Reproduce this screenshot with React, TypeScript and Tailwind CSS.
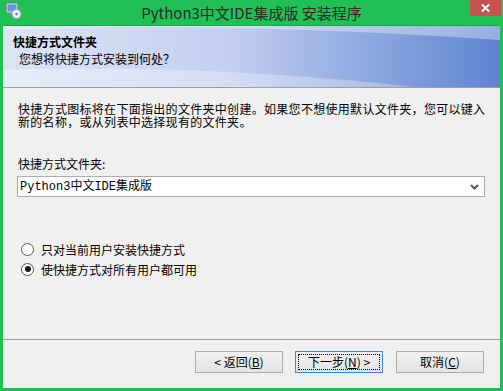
import React from 'react'

const cjk = { fontFamily: '"Noto Sans CJK SC", "Liberation Sans", sans-serif' }
const mono = { fontFamily: '"Liberation Mono", "Noto Sans CJK SC", monospace' }

function SetupIcon() {
  return (
    <svg width="17" height="17" viewBox="0 0 17 17">
      <rect x="1" y="1" width="12" height="10" rx="1" fill="#d7dde6" stroke="#6b7a8c" />
      <rect x="2.5" y="2.5" width="9" height="7" fill="#5b9be0" />
      <rect x="5" y="11" width="4" height="2" fill="#8a96a6" />
      <circle cx="11.5" cy="12" r="4.5" fill="#eef2f6" stroke="#8fa0b3" />
      <circle cx="11.5" cy="12" r="1.3" fill="#4b7ec2" />
    </svg>
  )
}

function HeaderArt() {
  return (
    <svg className="absolute inset-0" width="497" height="61" viewBox="0 0 497 61" preserveAspectRatio="none">
      <defs>
        <linearGradient id="hg" x1="0" y1="0" x2="1" y2="0">
          <stop offset="0" stopColor="#dde4f4" />
          <stop offset="0.45" stopColor="#c3cff0" />
          <stop offset="0.75" stopColor="#8ca6e0" />
          <stop offset="1" stopColor="#5e84d0" />
        </linearGradient>
      </defs>
      <rect width="497" height="61" fill="url(#hg)" />
      <path d="M0 4 C 150 -2, 320 2, 497 14 L 497 0 L 0 0 Z" fill="#ffffff" opacity="0.35" />
      <path d="M0 44 C 120 40, 260 44, 420 62 L 0 62 Z" fill="#ffffff" opacity="0.3" />
    </svg>
  )
}

function Radio({ checked, label }: { checked?: boolean; label: string }) {
  return (
    <div className="flex items-center h-[20px]">
      <span className="ml-[18px] w-[13px] h-[13px] rounded-full border border-[#555] bg-white flex items-center justify-center">
        {checked && <span className="w-[6px] h-[6px] rounded-full bg-[#1a1a1a]" />}
      </span>
      <span className="ml-[7px] text-[12px] text-black leading-[13px]">{label}</span>
    </div>
  )
}

function Btn({ children, focused }: { children: React.ReactNode; focused?: boolean }) {
  return (
    <div
      className={
        'w-[88px] h-[22px] flex items-center justify-center text-[12px] text-black bg-gradient-to-b from-[#f0f0f0] to-[#e5e5e5] ' +
        (focused ? 'border border-[#3c8be0] p-[2px]' : 'border border-[#acacac]')
      }
    >
      {focused ? (
        <div className="w-full h-full border border-dotted border-black flex items-center justify-center">{children}</div>
      ) : (
        children
      )}
    </div>
  )
}

export default function App() {
  return (
    <div className="w-[503px] h-[391px] bg-[#20c055] flex flex-col px-[3px] pb-[3px] overflow-hidden" style={cjk}>
      {/* title bar */}
      <div className="h-[25px] relative flex items-center justify-center shrink-0">
        <div className="absolute left-[2px] top-[2px]">
          <SetupIcon />
        </div>
        <span className="text-[15px] text-[#2b2b2b] leading-none -mt-[1px]">Python3中文IDE集成版 安装程序</span>
        <div className="absolute right-[-1px] top-0 w-[31px] h-[16px] bg-[#c75050] flex items-center justify-center">
          <svg width="9" height="8" viewBox="0 0 9 8">
            <path d="M1 0.5 L8 7.5 M8 0.5 L1 7.5" stroke="#fff" strokeWidth="2" />
          </svg>
        </div>
      </div>

      {/* content */}
      <div className="flex-1 bg-[#f0f0f0] flex flex-col border-t border-[#1aa84a]">
        <div className="h-[62px] relative shrink-0 border-b border-[#a0a0a0]">
          <HeaderArt />
          <div className="relative pt-[9px] pl-[10px]">
            <div className="text-[12px] font-bold text-black leading-[14px]">快捷方式文件夹</div>
            <div className="text-[12px] text-black leading-[14px] mt-[3px] pl-[6px]">您想将快捷方式安装到何处？</div>
          </div>
        </div>

        <div className="pt-[14px] pl-[15px] pr-[14px]">
          <p className="text-[12px] leading-[13px] text-black tracking-[0.3px]">
            快捷方式图标将在下面指出的文件夹中创建。如果您不想使用默认文件夹，您可以键入
            <br />
            新的名称，或从列表中选择现有的文件夹。
          </p>
          <div className="mt-[29px] text-[12px] leading-[13px] text-black">快捷方式文件夹:</div>
          <div className="mt-[6px] w-[468px] -ml-[1px] h-[21px] bg-white border border-[#acacac] flex items-center justify-between pl-[2px] pr-[5px]">
            <span className="text-[12px] leading-none text-black" style={mono}>
              Python3中文IDE集成版
            </span>
            <svg width="9" height="6" viewBox="0 0 9 6">
              <path d="M1 1 L4.5 4.5 L8 1" stroke="#555" strokeWidth="2" fill="none" />
            </svg>
          </div>
        </div>

        <div className="mt-[42px] flex flex-col">
          <Radio label="只对当前用户安装快捷方式" />
          <Radio checked label="使快捷方式对所有用户都可用" />
        </div>

        <div className="mt-auto border-t border-[#a0a0a0] h-[49px] flex justify-end items-start pt-[11px] pr-[16px]">
          <Btn>
            <span>&lt; 返回(<span className="underline">B</span>)</span>
          </Btn>
          <div className="w-[12px]" />
          <Btn focused>
            <span>下一步(<span className="underline">N</span>) &gt;</span>
          </Btn>
          <div className="w-[13px]" />
          <Btn>
            <span>取消(<span className="underline">C</span>)</span>
          </Btn>
        </div>
      </div>
    </div>
  )
}
